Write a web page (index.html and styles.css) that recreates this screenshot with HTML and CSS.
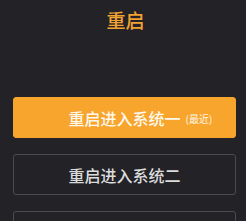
FILE: index.html
```html
<!DOCTYPE html>
<html lang="zh">
<head>
<meta charset="utf-8">
<link rel="stylesheet" href="styles.css">
</head>
<body>
<div class="screen">
  <h1 class="title">重启</h1>
  <div class="options">
    <button class="opt opt-primary"><span class="label">重启进入系统一<span class="tag">(最近)</span></span></button>
    <button class="opt opt-outline"><span class="label">重启进入系统二</span></button>
    <button class="opt opt-outline" aria-label="取消"></button>
  </div>
</div>
</body>
</html>
```
FILE: styles.css
```css
html, body {
  margin: 0;
  padding: 0;
  background: #232227;
}
.screen {
  width: 246px;
  height: 221px;
  overflow: hidden;
  font-family: "Noto Sans CJK SC", "Noto Sans", sans-serif;
  box-sizing: border-box;
  padding: 8px 10px 0 13px;
}
.title {
  margin: 0;
  text-align: center;
  font-size: 19px;
  line-height: 24px;
  font-weight: 500;
  color: #f2a232;
  padding-left: 2px;
}
.options {
  display: flex;
  flex-direction: column;
  gap: 16px;
  margin-top: 65px;
}
.opt {
  height: 41px;
  border-radius: 3px;
  font-family: inherit;
  font-size: 16px;
  font-weight: 500;
  display: flex;
  align-items: center;
  justify-content: center;
  padding: 0;
  flex: none;
}
.label {
  position: relative;
}
.opt-primary {
  background: #f7a52c;
  border: 1px solid #f7a52c;
  color: #fff8ec;
}
.opt-outline {
  background: transparent;
  border: 1.5px solid #4a4a50;
  color: #dcdcdc;
}
.tag {
  position: absolute;
  left: 100%;
  top: 50%;
  transform: translateY(-50%);
  margin-left: 5px;
  font-size: 10px;
  font-weight: 400;
  white-space: nowrap;
}
```
